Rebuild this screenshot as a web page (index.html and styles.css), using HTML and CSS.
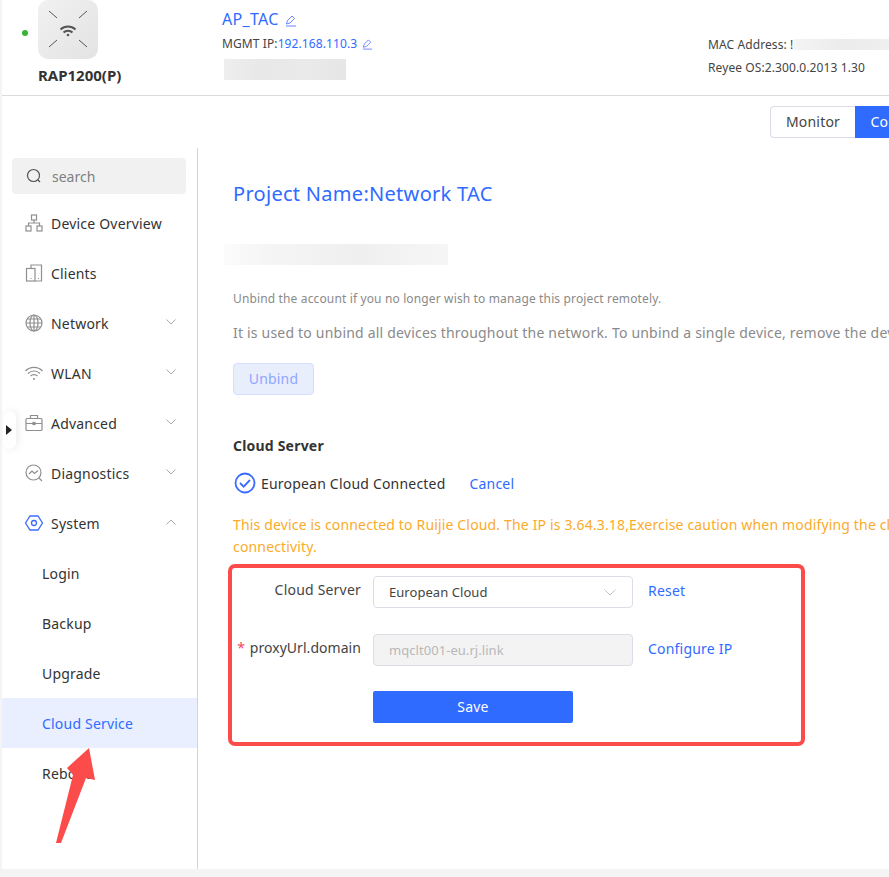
FILE: index.html
```html
<!DOCTYPE html>
<html lang="en">
<head>
<meta charset="utf-8">
<title>Cloud Service</title>
<link rel="stylesheet" href="styles.css">
</head>
<body>
<div class="app">
  <header class="header">
    <div class="device">
      <span class="dot"></span>
      <div class="device-col">
        <div class="tile">
          <svg width="60" height="59" viewBox="0 0 60 59" fill="none" stroke="#555" stroke-width="1">
            <path d="M11 11l8 7M49 11l-8 7M11 47l8-7M49 47l-8-7"/>
            <path d="M22.500 29.500a11 11 0 0 1 15 0" stroke-width="2"/>
            <path d="M25.500 32.500a6.500 6.500 0 0 1 9 0" stroke-width="2"/>
            <circle cx="30" cy="35" r="1.300" fill="#555" stroke="none"/>
          </svg>
        </div>
        <div class="device-name">RAP1200(P)</div>
      </div>
    </div>
    <div class="info">
      <div class="ap-name">AP_TAC
        <svg class="pen" width="12" height="12" viewBox="0 0 12 12" fill="none" stroke="#6b83ff"><path d="M1.500 9l1-3.500L7 1l2.500 2.500L5 8zM1 11h10"/></svg>
      </div>
      <div class="mgmt">MGMT IP:<span class="blue">192.168.110.3</span>
        <svg class="pen" width="11" height="11" viewBox="0 0 12 12" fill="none" stroke="#6b83ff"><path d="M1.500 9l1-3.500L7 1l2.500 2.500L5 8zM1 11h10"/></svg>
      </div>
      <div class="blur blur-sn"></div>
    </div>
    <div class="meta">
      <div class="meta-line">MAC Address: <span class="clip">!</span><span class="blur blur-mac"></span></div>
      <div class="meta-line">Reyee OS:2.300.0.2013 1.30</div>
    </div>
  </header>

  <div class="tabs">
    <button class="tab">Monitor</button>
    <button class="tab tab-on">Config</button>
  </div>

  <div class="body">
    <aside class="sidebar">
      <div class="search">
        <svg width="16" height="16" viewBox="0 0 16 16" fill="none" stroke="#555" stroke-width="1.200"><circle cx="7.500" cy="7.500" r="6"/><path d="M12 12l2 2"/></svg>
        <span>search</span>
      </div>
      <nav class="nav">
        <a class="item">
          <svg class="ic" width="20" height="20" viewBox="0 0 20 20" fill="none" stroke="#8f8f8f" stroke-width="1.200"><rect x="7.500" y="2" width="5" height="5"/><rect x="2" y="13" width="5" height="5"/><rect x="13" y="13" width="5" height="5"/><path d="M10 7v3M4.500 13v-3h11v3"/></svg>
          <span>Device Overview</span>
        </a>
        <a class="item">
          <svg class="ic" width="20" height="20" viewBox="0 0 20 20" fill="none" stroke="#8f8f8f" stroke-width="1.200"><path d="M7 5V2h10.500v16H11"/><rect x="2.500" y="5.500" width="8.500" height="12.500"/><path d="M6.500 15.500h1M14 15.500h1"/></svg>
          <span>Clients</span>
        </a>
        <a class="item">
          <svg class="ic" width="20" height="20" viewBox="0 0 20 20" fill="none" stroke="#8f8f8f" stroke-width="1.200"><circle cx="10" cy="10" r="8"/><ellipse cx="10" cy="10" rx="4" ry="8"/><path d="M10 2v16M2 10h16M3 6h14M3 14h14"/></svg>
          <span>Network</span>
          <svg class="chev" width="10" height="6" viewBox="0 0 10 6" fill="none" stroke="#a9a9a9"><path d="M.5.500L5 5 9.500.500"/></svg>
        </a>
        <a class="item">
          <svg class="ic" width="20" height="20" viewBox="0 0 20 20" fill="none" stroke="#8f8f8f" stroke-width="1.200"><path d="M1.500 8a12 12 0 0 1 17 0M4 10.500a8.500 8.500 0 0 1 12 0M6.500 13a5 5 0 0 1 7 0"/><circle cx="10" cy="16" r="1" fill="#8f8f8f" stroke="none"/></svg>
          <span>WLAN</span>
          <svg class="chev" width="10" height="6" viewBox="0 0 10 6" fill="none" stroke="#a9a9a9"><path d="M.5.500L5 5 9.500.500"/></svg>
        </a>
        <a class="item">
          <svg class="ic" width="20" height="20" viewBox="0 0 20 20" fill="none" stroke="#8f8f8f" stroke-width="1.200"><rect x="2" y="5.500" width="16" height="12" rx="1"/><path d="M6.500 5.500V2.500h7v3M2 10.500h16"/><rect x="9" y="9.500" width="2" height="2" fill="#8f8f8f"/></svg>
          <span>Advanced</span>
          <svg class="chev" width="10" height="6" viewBox="0 0 10 6" fill="none" stroke="#a9a9a9"><path d="M.5.500L5 5 9.500.500"/></svg>
        </a>
        <a class="item">
          <svg class="ic" width="20" height="20" viewBox="0 0 20 20" fill="none" stroke="#8f8f8f" stroke-width="1.200"><circle cx="9.500" cy="9.500" r="7.500"/><path d="M15 15l3 3M5 11l3-3 2.500 2.500L14 7.500"/></svg>
          <span>Diagnostics</span>
          <svg class="chev" width="10" height="6" viewBox="0 0 10 6" fill="none" stroke="#a9a9a9"><path d="M.5.500L5 5 9.500.500"/></svg>
        </a>
        <a class="item">
          <svg class="ic" width="20" height="20" viewBox="0 0 20 20" fill="none" stroke="#3b6cff" stroke-width="1.300"><path d="M6 3h8l4.500 7-4.500 7H6l-4.500-7z"/><circle cx="10" cy="10" r="2.500"/></svg>
          <span>System</span>
          <svg class="chev" width="10" height="6" viewBox="0 0 10 6" fill="none" stroke="#a9a9a9"><path d="M.5 5.500L5 1l4.500 4.500"/></svg>
        </a>
        <a class="item sub">Login</a>
        <a class="item sub">Backup</a>
        <a class="item sub">Upgrade</a>
        <a class="item sub active">Cloud Service</a>
        <a class="item sub">Reboot</a>
      </nav>
    </aside>

    <main class="main">
      <h1 class="title">Project Name:Network TAC</h1>
      <div class="blur blur-account"></div>
      <p class="hint">Unbind the account if you no longer wish to manage this project remotely.</p>
      <p class="desc">It is used to unbind all devices throughout the network. To unbind a single device, remove the device from the project.</p>
      <button class="unbind">Unbind</button>
      <h2 class="section">Cloud Server</h2>
      <div class="status">
        <svg width="22" height="22" viewBox="0 0 22 22" fill="none" stroke="#3b6cff" stroke-width="1.800"><circle cx="11" cy="11" r="9.500"/><path d="M6 11l3.600 3.600 6.400-6.600"/></svg>
        <span class="status-text">European Cloud Connected</span>
        <a class="link">Cancel</a>
      </div>
      <p class="warn">This device is connected to Ruijie Cloud. The IP is 3.64.3.18,Exercise caution when modifying the cloud server, as it may affect<br>connectivity.</p>
      <form class="form">
        <div class="row">
          <label class="label">Cloud Server</label>
          <div class="field">
            <span>European Cloud</span>
            <svg width="12" height="7" viewBox="0 0 12 7" fill="none" stroke="#c4c4c4"><path d="M.5.500L6 6 11.500.500"/></svg>
          </div>
          <a class="link">Reset</a>
        </div>
        <div class="row row-tight">
          <label class="label label-proxy"><i class="req">*</i> proxyUrl.domain</label>
          <div class="field disabled"><span>mqclt001-eu.rj.link</span></div>
          <a class="link">Configure IP</a>
        </div>
        <div class="row">
          <span class="label"></span>
          <button class="save" type="button">Save</button>
        </div>
      </form>
    </main>
  </div>

  <button class="collapse" type="button" aria-label="Expand"></button>
  <svg class="arrow" width="50" height="100" viewBox="0 0 50 100"><polygon fill="#fb4b4b" points="34,3 12,23 18,30 1,98 6,98 31,33 40,35"/></svg>
  <div class="frame"></div>
</div>
<div class="foot"></div>
</body>
</html>
```

FILE: styles.css
```css
* { box-sizing: border-box; }
html, body { margin: 0; padding: 0; }
body {
  width: 889px;
  height: 877px;
  overflow: hidden;
  background: #f4f4f5;
  font-family: "Noto Sans", "Open Sans", sans-serif;
  font-size: 14px;
  letter-spacing: .2px;
  color: #333;
}
.app {
  position: relative;
  height: 869px;
  margin-left: 2px;
  background: #fff;
  overflow: hidden;
}
.foot { height: 8px; }
.blue, .link { color: #2f6bff; }

.header {
  display: flex;
  height: 96px;
  border-bottom: 1px solid #dcdce0;
}
.device { display: flex; width: 220px; flex: none; }
.dot {
  width: 6px;
  height: 6px;
  margin: 30px 0 0 20px;
  border-radius: 50%;
  background: #35b534;
}
.device-col { margin-left: 10px; }
.tile {
  width: 60px;
  height: 59px;
  border-radius: 10px;
  background: linear-gradient(135deg, #f1f1f1, #e3e3e3);
}
.device-name {
  margin-top: 6px;
  font-size: 15px;
  font-weight: 700;
  line-height: 20px;
  letter-spacing: 0;
  color: #333;
}
.info { width: 486px; flex: none; }
.ap-name { margin-top: 8px; font-size: 16px; line-height: 22px; letter-spacing: .3px; color: #2f6bff; }
.mgmt { margin-top: 4px; font-size: 12px; line-height: 20px; letter-spacing: .1px; color: #444; }
.pen { margin-left: 2px; vertical-align: -2px; }
.blur-sn {
  width: 122px;
  height: 21px;
  margin: 5px 0 0 2px;
  background: linear-gradient(90deg, #eee, #e8e8e8 30%, #eaeaea 70%, #e6e6e6);
}
.meta { padding-top: 35px; font-size: 12px; letter-spacing: .1px; color: #444; }
.meta-line { display: flex; line-height: 20px; margin-bottom: 3px; white-space: pre; }
.clip { width: 4px; overflow: hidden; }
.blur-mac {
  width: 170px;
  height: 11px;
  margin-top: 4px;
  background: linear-gradient(90deg, #f4f4f4, #ebebeb 30%, #f1f1f1 60%, #ececec);
}

.tabs {
  display: flex;
  height: 52px;
  padding: 10px 0 0 768px;
  width: 960px;
}
.tab {
  width: 85px;
  height: 32px;
  padding: 0 0 2px;
  border: 1px solid #dcdce6;
  border-right: 0;
  border-radius: 4px 0 0 4px;
  background: #fff;
  font: inherit;
  letter-spacing: .2px;
  color: #444;
}
.tab-on {
  width: 75px;
  border: 0;
  border-radius: 0 4px 4px 0;
  background: #2f6bff;
  color: #fff;
}

.body { display: flex; height: 721px; }
.sidebar {
  width: 196px;
  flex: none;
  border-right: 1px solid #d4d4d4;
  padding-top: 10px;
}
.search {
  display: flex;
  align-items: center;
  gap: 10px;
  width: 174px;
  height: 36px;
  margin-left: 10px;
  padding-left: 14px;
  border-radius: 4px;
  background: #f1f1f1;
  letter-spacing: 0;
  color: #7f7f7f;
}
.nav { display: flex; flex-direction: column; margin-top: 4px; }
.item {
  display: flex;
  align-items: center;
  height: 50px;
  padding-left: 22px;
  color: #333;
}
.ic { flex: none; margin-right: 7px; }
.chev { margin-left: auto; margin-right: 21px; margin-top: -3px; }
.sub { padding-left: 40px; }
.active { background: #e9efff; color: #2f6bff; }

.main {
  flex: 1;
  min-width: 0;
  overflow: hidden;
  padding: 31px 0 0 35px;
}
.title {
  margin: 0;
  font-size: 20px;
  font-weight: 400;
  line-height: 30px;
  letter-spacing: .29px;
  color: #2f6bff;
}
.blur-account {
  width: 224px;
  height: 21px;
  margin: 35px 0 0 -9px;
  background: linear-gradient(90deg, #fbfbfb, #f5f5f5 20%, #efefef 60%, #f6f6f6);
}
.hint { margin: 25px 0 0; font-size: 12px; line-height: 18px; letter-spacing: .14px; color: #8a8a8a; white-space: nowrap; }
.desc { margin: 14px 0 0; line-height: 22px; color: #8a8a8a; white-space: nowrap; }
.unbind {
  display: block;
  width: 81px;
  height: 32px;
  margin-top: 19px;
  padding: 0 0 2px;
  border: 1px solid #d5defc;
  border-radius: 4px;
  background: #e9eefd;
  font: inherit;
  letter-spacing: .2px;
  color: #8fa6ff;
}
.section { margin: 40px 0 0; font-size: 14px; font-weight: 700; line-height: 22px; color: #333; }
.status { display: flex; align-items: center; height: 24px; margin-top: 14px; }
.status svg { margin-left: 1px; }
.status-text { margin-left: 5px; color: #333; }
.status .link { margin-left: 24px; }
.warn { margin: 19px 0 0; line-height: 22px; letter-spacing: .16px; color: #fbab2a; white-space: nowrap; }

.form { margin-top: 18px; }
.row { display: flex; align-items: flex-start; height: 58px; }
.row-tight { height: 57px; }
.label { width: 128px; flex: none; text-align: right; line-height: 28px; color: #444; white-space: nowrap; }
.label-proxy { letter-spacing: .05px; }
.req { font-style: normal; margin-right: 1px; color: #f5475b; }
.field {
  display: flex;
  align-items: center;
  justify-content: space-between;
  width: 260px;
  height: 32px;
  margin: 0 15px 0 12px;
  padding: 0 16px 0 15px;
  border: 1px solid #dcdce6;
  border-radius: 4px;
  font-size: 13px;
  letter-spacing: .05px;
  color: #444;
}
.disabled { background: #f3f3f3; color: #b8b8b8; }
.row .link { line-height: 30px; }
.save {
  width: 200px;
  height: 32px;
  margin-left: 12px;
  padding: 0 0 2px;
  border: 0;
  border-radius: 2px;
  background: #2f6bff;
  font: inherit;
  letter-spacing: .2px;
  color: #fff;
}

.collapse {
  position: absolute;
  left: 1px;
  top: 411px;
  width: 13px;
  height: 38px;
  padding: 0;
  border: 0;
  border-radius: 7px;
  background: #fff;
  box-shadow: 2px 0 8px rgba(0, 0, 0, .08);
}
.collapse::after {
  content: "";
  position: absolute;
  left: 3px;
  top: 14px;
  border-style: solid;
  border-width: 5px 0 5px 6px;
  border-color: transparent transparent transparent #222;
}
.arrow { position: absolute; left: 53px; top: 745px; }
.frame {
  position: absolute;
  left: 226px;
  top: 564px;
  width: 577px;
  height: 182px;
  border: 4px solid #fb4b4b;
  border-radius: 7px;
}
```
